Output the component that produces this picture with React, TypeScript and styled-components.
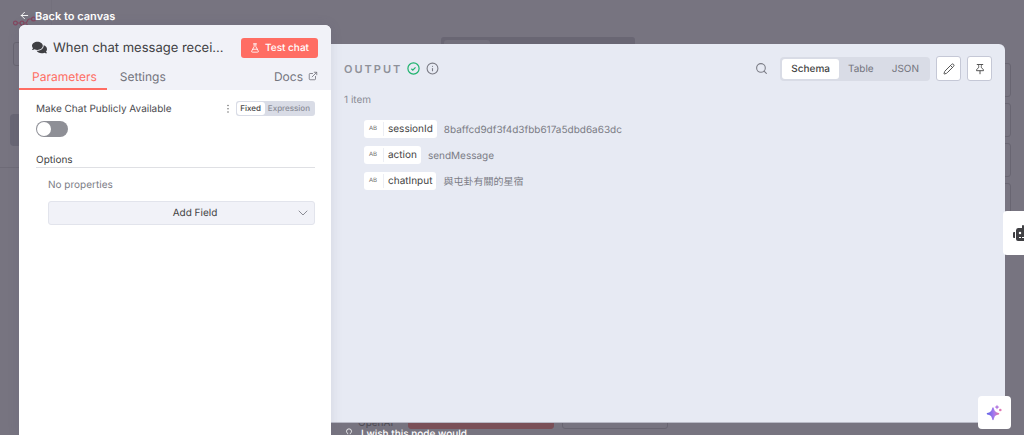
import React from "react";
import styled, { createGlobalStyle, css } from "styled-components";
import { ArrowLeft, ExternalLink, Search, Pencil, ChevronDown, Lightbulb, Info, FlaskConical } from "lucide-react";
import { FaComments, FaRobot } from "react-icons/fa";

const Global = createGlobalStyle`
  * { box-sizing: border-box; }
  body {
    margin: 0;
    font-family: Inter, "Noto Sans CJK TC", sans-serif;
    font-size: 10px;
    color: #555;
    text-rendering: geometricPrecision;
  }
  button, input { font-family: inherit; margin: 0; text-rendering: inherit; }
  button { cursor: pointer; }
`;

const Page = styled.div`
  position: relative;
  height: 100vh;
  overflow: hidden;
  background: #777480;
`;

/* Dimmed editor behind the dialog */
const Backdrop = styled.div`
  position: absolute;
  inset: 0;
  display: flex;
`;

const Rail = styled.div`
  width: 52px;
  border-right: 1px solid #73707c;
  padding: 16px 0 0 13px;
  display: flex;
  flex-direction: column;
`;

const RailLogo = styled.svg`
  width: 28px;
  height: 12px;
  color: #84475f;
`;

const RailBox = styled.div`
  margin-top: 14px;
  height: 24px;
  border: 1px solid #686571;
  border-radius: 3px;
`;

const RailActive = styled.div`
  margin: 48px 0 0 -3px;
  height: 32px;
  border-radius: 4px;
  background: #686674;
`;

const RailLine = styled.div`
  margin: 21px 0 0 -13px;
  border-top: 1px solid #6e6b77;
`;

const Stage = styled.div`
  flex: 1;
  display: flex;
  flex-direction: column;
  justify-content: space-between;
`;

const StageTabs = styled.div`
  margin: 37px 0 0 389px;
  width: 194px;
  height: 20px;
  border-radius: 3px;
  background: #696673;
  padding: 3px;
`;

const StageTab = styled.div`
  width: 46px;
  height: 14px;
  border-radius: 3px;
  background: #73707c;
`;

const StageBottom = styled.div`
  display: flex;
  gap: 8px;
  padding: 0 0 6px 306px;
  height: 22px;
  color: #4c4a53;
  line-height: 20px;
`;

const StageLabel = styled.span`
  width: 42px;
`;

const StageAction = styled.div<{ $filled?: boolean }>`
  width: ${(p) => (p.$filled ? 146 : 106)}px;
  border-radius: 3px;
  border: 1px solid ${(p) => (p.$filled ? "#7a5058" : "#686571")};
  background: ${(p) => (p.$filled ? "#7a5058" : "transparent")};
`;

const StageTools = styled.div`
  width: 46px;
  padding: 63px 13px 0 0;
  display: flex;
  flex-direction: column;
  gap: 6px;
`;

const ToolBox = styled.div`
  height: 34px;
  border: 1px solid #686571;
  border-radius: 3px;
`;

/* Node dialog */
const Dialog = styled.main`
  position: relative;
  height: 100%;
  padding: 0 19px;
  display: flex;
  flex-direction: column;
`;

const BackLink = styled.a`
  display: flex;
  align-items: center;
  gap: 5px;
  height: 25px;
  padding-top: 6px;
  color: #fff;
  font-size: 11px;
  font-weight: 600;
  text-decoration: none;
`;

const Columns = styled.div`
  flex: 1;
  display: flex;
`;

const Settings = styled.section`
  position: relative;
  width: 312px;
  background: #fff;
  border-radius: 6px 6px 0 0;
  box-shadow: 0 0 12px rgba(80, 80, 110, 0.14);
`;

const SettingsHead = styled.header`
  background: #f1f2f8;
  border-radius: 6px 6px 0 0;
`;

const TitleRow = styled.div`
  display: flex;
  align-items: center;
  gap: 6px;
  height: 39px;
  padding: 6px 13px 0 13px;
  color: #3f3f43;
`;

const Title = styled.h1`
  flex: 1;
  margin: 0;
  font-size: 13px;
  font-weight: 400;
  white-space: nowrap;
`;

const TestButton = styled.button`
  display: flex;
  align-items: center;
  justify-content: center;
  gap: 5px;
  width: 77px;
  height: 20px;
  padding: 0;
  border: 0;
  border-radius: 3px;
  background: #ff6d63;
  color: #fff;
  font-size: 10px;
  font-weight: 500;
`;

const TabRow = styled.nav`
  display: flex;
  justify-content: space-between;
  height: 26px;
  padding-right: 13px;
`;

const TabGroup = styled.div`
  display: flex;
`;

const tabText = css`
  display: flex;
  align-items: center;
  gap: 5px;
  padding-bottom: 2px;
  font-size: 12px;
  font-weight: 400;
  color: #73747d;
  background: none;
`;

const Tab = styled.button<{ $active?: boolean }>`
  ${tabText}
  padding: 0 10px 2px 13px;
  border: 0;
  ${(p) =>
    p.$active &&
    css`
      color: #ff6d63;
      box-shadow: inset 0 -2px #ff6d63;
    `}
`;

const DocsLink = styled.a`
  ${tabText}
  text-decoration: none;
`;

const Form = styled.div`
  padding: 11px 16px 11px 17px;
`;

const FieldRow = styled.div`
  display: flex;
  align-items: center;
  height: 15px;
  color: #4c4c50;
`;

const FieldLabel = styled.label`
  flex: 1;
`;

const Dots = styled.button`
  padding: 0;
  border: 0;
  margin-right: 6px;
  background: none;
  color: #777;
  display: flex;
`;

const Modes = styled.div`
  display: flex;
  height: 15px;
  padding: 1px;
  border-radius: 3px;
  background: #d9dce6;
`;

const Mode = styled.button<{ $active?: boolean }>`
  padding: 0 4px 0 3px;
  border: 0;
  border-radius: 3px;
  font-size: 8px;
  font-weight: 500;
  line-height: 13px;
  background: ${(p) => (p.$active ? "#fff" : "transparent")};
  color: ${(p) => (p.$active ? "#444" : "#8a8c97")};
`;

const Toggle = styled.input`
  appearance: none;
  display: block;
  width: 32px;
  height: 16px;
  margin: 5px 0 0 !important;
  border-radius: 8px;
  background: #8e8f96;
  &::before {
    content: "";
    display: block;
    width: 14px;
    height: 14px;
    margin: 1px;
    border-radius: 50%;
    background: #fff;
  }
`;

const GroupTitle = styled.h2`
  margin: 16px 0 0;
  height: 15px;
  border-bottom: 1px solid #dfe0e4;
  color: #3f3f43;
  font-size: 10px;
  line-height: 14px;
  font-weight: 400;
`;

const Group = styled.div`
  padding: 10px 0 0 12px;
`;

const Empty = styled.p`
  margin: 0 0 9px;
  line-height: 14px;
  color: #7b7c85;
`;

const AddField = styled.button`
  display: flex;
  align-items: center;
  width: 100%;
  height: 24px;
  padding: 0 3px 0 46px;
  border: 1px solid #e2e4ec;
  border-radius: 3px;
  background: #f1f2f8;
  color: #444;
  font-size: 10px;
  font-weight: 400;
  span { flex: 1; }
  svg { color: #8b8c95; }
`;

const Result = styled.div`
  flex: 1;
  min-width: 0;
  padding-top: 19px;
  display: flex;
  flex-direction: column;
`;

const Output = styled.section`
  flex: 1;
  padding: 12px 13px;
  background: #e7eaf3;
  border-radius: 0 6px 0 0;
  border-bottom: 1px solid #b9bac6;
`;

const OutputHead = styled.header`
  display: flex;
  align-items: center;
  height: 25px;
`;

const OutputTitle = styled.h2`
  margin: 0 5px 0 0;
  color: #8f9199;
  font-size: 11px;
  font-weight: 600;
  letter-spacing: 2px;
`;

const Status = styled.div`
  flex: 1;
  display: flex;
  gap: 6px;
  color: #7b7c85;
`;

const PlainButton = styled.button`
  display: flex;
  padding: 0;
  border: 0;
  margin-right: 12px;
  background: none;
  color: #7b7c85;
`;

const Views = styled.div`
  display: flex;
  height: 24px;
  padding: 2px;
  margin-right: 6px;
  border-radius: 4px;
  background: #d9dce6;
`;

const View = styled.button<{ $active?: boolean }>`
  padding: 0 9px;
  border: 0;
  border-radius: 3px;
  font-size: 10px;
  font-weight: ${(p) => (p.$active ? 500 : 400)};
  background: ${(p) => (p.$active ? "#fff" : "transparent")};
  color: ${(p) => (p.$active ? "#444" : "#73747d")};
`;

const IconButton = styled.button`
  display: flex;
  align-items: center;
  justify-content: center;
  width: 25px;
  height: 25px;
  padding: 0;
  border: 1px solid #c5c8d6;
  border-radius: 3px;
  background: #fff;
  color: #555;
  & + & { margin-left: 6px; }
`;

const Count = styled.p`
  margin: 12px 0 13px;
  line-height: 14px;
  color: #8a8c95;
`;

const Schema = styled.ul`
  margin: 0;
  padding: 0 0 0 20px;
  list-style: none;
  display: flex;
  flex-direction: column;
  gap: 8px;
`;

const SchemaRow = styled.li`
  display: flex;
  align-items: center;
  gap: 7px;
  height: 18px;
`;

const Pill = styled.span`
  display: flex;
  align-items: center;
  height: 18px;
  border-radius: 3px;
  background: #fff;
  color: #444;
`;

const TypeTag = styled.span`
  width: 20px;
  padding-left: 5px;
  border-right: 1px solid #eceef4;
  color: #777;
  font-family: "DejaVu Sans", sans-serif;
  font-size: 6px;
  line-height: 14px;
`;

const Name = styled.span`
  padding: 0 4px;
`;

const Value = styled.span`
  padding-top: 2px;
  line-height: 12px;
  color: #7b7c85;
`;

const Feedback = styled.a`
  display: flex;
  gap: 7px;
  height: 12px;
  padding: 5px 0 0 13px;
  color: #fff;
  font-size: 10px;
  font-weight: 500;
  line-height: 12px;
  text-decoration: none;
  white-space: nowrap;
  svg { flex: none; }
`;

const NextNode = styled.button`
  position: absolute;
  right: 0;
  top: 211px;
  width: 21px;
  height: 44px;
  padding: 0 0 0 10px;
  border: 0;
  border-radius: 4px 0 0 4px;
  background: #fff;
  color: #3f3f43;
  overflow: hidden;
  display: flex;
  align-items: center;
  svg { flex: none; }
`;

const Assistant = styled.button`
  position: absolute;
  right: 13px;
  bottom: 6px;
  width: 33px;
  height: 33px;
  padding: 0;
  border: 0;
  border-radius: 4px;
  background: #fff;
  display: flex;
  align-items: center;
  justify-content: center;
`;

const fields = [
  { name: "sessionId", value: "8baffcd9df3f4d3fbb617a5dbd6a63dc" },
  { name: "action", value: "sendMessage" },
  { name: "chatInput", value: "與屯卦有關的星宿" },
];

const views = ["Schema", "Table", "JSON"];

export default function App() {
  return (
    <Page>
      <Global />
      <Backdrop aria-hidden="true">
        <Rail>
          <RailLogo viewBox="0 0 28 12" fill="none" stroke="currentColor" strokeWidth="1.2">
            <circle cx="2.4" cy="7" r="1.9" />
            <circle cx="9" cy="7" r="1.9" />
            <path d="M4.3 7h2.8M11 7h1.600c2 0 1.400-4 3.600-4h2.400M12.600 7c2 0 1.400 4 3.600 4h2.400" />
            <circle cx="20.5" cy="3" r="1.9" />
          </RailLogo>
          <RailBox />
          <RailActive />
          <RailLine />
        </Rail>
        <Stage>
          <StageTabs>
            <StageTab />
          </StageTabs>
          <StageBottom>
            <StageLabel>OpenAI</StageLabel>
            <StageAction $filled />
            <StageAction />
          </StageBottom>
        </Stage>
        <StageTools>
          <ToolBox />
          <ToolBox />
          <ToolBox />
          <ToolBox />
        </StageTools>
      </Backdrop>

      <Dialog>
        <BackLink href="#canvas">
          <ArrowLeft size={11} strokeWidth={2} />
          Back to canvas
        </BackLink>
        <Columns>
          <Settings>
            <SettingsHead>
              <TitleRow>
                <FaComments size={15} />
                <Title>When chat message recei...</Title>
                <TestButton>
                  <FlaskConical size={10} strokeWidth={2} />
                  Test chat
                </TestButton>
              </TitleRow>
              <TabRow>
                <TabGroup>
                  <Tab $active>Parameters</Tab>
                  <Tab>Settings</Tab>
                </TabGroup>
                <DocsLink href="#docs">
                  Docs <ExternalLink size={10} strokeWidth={2} />
                </DocsLink>
              </TabRow>
            </SettingsHead>
            <Form>
              <FieldRow>
                <FieldLabel htmlFor="public">Make Chat Publicly Available</FieldLabel>
                <Dots aria-label="Parameter options">
                  <svg width="4" height="10" viewBox="0 0 4 10" fill="currentColor">
                    <circle cx="2" cy="1.5" r="0.8" />
                    <circle cx="2" cy="4.7" r="0.8" />
                    <circle cx="2" cy="8" r="0.8" />
                  </svg>
                </Dots>
                <Modes>
                  <Mode $active>Fixed</Mode>
                  <Mode>Expression</Mode>
                </Modes>
              </FieldRow>
              <Toggle id="public" type="checkbox" role="switch" />
              <GroupTitle>Options</GroupTitle>
              <Group>
                <Empty>No properties</Empty>
                <AddField>
                  <span>Add Field</span>
                  <ChevronDown size={16} strokeWidth={1.5} />
                </AddField>
              </Group>
            </Form>
          </Settings>

          <Result>
            <Output>
              <OutputHead>
                <OutputTitle>OUTPUT</OutputTitle>
                <Status>
                  <svg width="13" height="13" viewBox="0 0 13 13" fill="none" stroke="#1fb36e" strokeWidth="1.2">
                    <circle cx="6.5" cy="6.5" r="5.6" />
                    <path d="M4.4 6.8l1.4 1.3 2.7-2.8" />
                  </svg>
                  <Info size={13} strokeWidth={2} />
                </Status>
                <PlainButton aria-label="Search">
                  <Search size={13} strokeWidth={2} />
                </PlainButton>
                <Views>
                  {views.map((view, i) => (
                    <View key={view} $active={i === 0}>
                      {view}
                    </View>
                  ))}
                </Views>
                <IconButton aria-label="Edit output">
                  <Pencil size={12} strokeWidth={2} />
                </IconButton>
                <IconButton aria-label="Pin data">
                  <svg width="12" height="12" viewBox="0 0 12 12" fill="none" stroke="currentColor" strokeWidth="1">
                    <path d="M2.800 1.500h6.400M4.300 1.500c.6 1.500.5 2.800 0 3.600C3.300 5.500 2.500 6.300 2.500 7.700h7c0-1.400-.8-2.200-1.800-2.600-.5-.8-.6-2.100 0-3.600M6 7.700v3.500" />
                  </svg>
                </IconButton>
              </OutputHead>
              <Count>1 item</Count>
              <Schema>
                {fields.map((field) => (
                  <SchemaRow key={field.name}>
                    <Pill>
                      <TypeTag>AB</TypeTag>
                      <Name>{field.name}</Name>
                    </Pill>
                    <Value>{field.value}</Value>
                  </SchemaRow>
                ))}
              </Schema>
            </Output>
            <Feedback href="#feedback">
              <Lightbulb size={10} strokeWidth={2} />
              I wish this node would
            </Feedback>
          </Result>
        </Columns>
      </Dialog>

      <NextNode aria-label="Next node">
        <FaRobot size={20} />
      </NextNode>
      <Assistant aria-label="Assistant">
        <svg width="17" height="17" viewBox="0 0 17 17">
          <defs>
            <linearGradient id="spark" x1="0" y1="0" x2="1" y2="0">
              <stop offset="0" stopColor="#5b60e8" />
              <stop offset="0.6" stopColor="#aa7bec" />
              <stop offset="1" stopColor="#e5739b" />
            </linearGradient>
          </defs>
          <path
            fill="url(#spark)"
            d="M7 3.200Q7.800 3.200 8 5Q8.600 8 10.800 8.500Q13.400 8.900 13.400 9.700Q13.400 10.500 10.800 10.900Q8.600 11.400 8 14.200Q7.800 16.200 7 16.200Q6.200 16.200 6 14.200Q5.400 11.400 3.200 10.900Q.6 10.500 .6 9.700Q.6 8.900 3.200 8.500Q5.400 8 6 5Q6.200 3.200 7 3.200Z"
          />
          <path fill="#b57be0" d="M11 .8l.8 1.500 1.600.8-1.600.8-.8 1.500-.8-1.500-1.600-.8 1.600-.8z" />
          <circle cx="14.300" cy="6" r="1.300" fill="#e07ab4" />
        </svg>
      </Assistant>
    </Page>
  );
}
